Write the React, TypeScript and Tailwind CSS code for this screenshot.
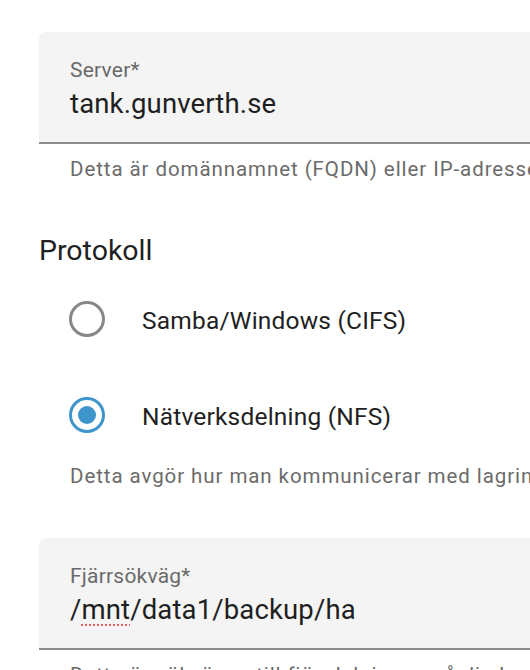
const font = { fontFamily: "Roboto, 'Noto Sans', sans-serif" };

function TextField({ label, value, spell }: { label: string; value: string; spell?: boolean }) {
  return (
    <div className="h-[112px] w-[640px] rounded-t-[7px] border-b-2 border-[#8c8c8c] bg-[#f4f4f4] pl-[31px] pt-[26px]">
      <div className="text-[21px] leading-[24px] tracking-[0.01em] text-[#6a6a6a]">{label}</div>
      <div className="mt-[6px] whitespace-nowrap text-[27.5px] leading-[32px] tracking-[0.005em] text-[#1f1f1f]">
        {spell ? (
          <>
            /
            <span className="underline decoration-dotted decoration-[#e06666] decoration-2 underline-offset-[5px]">mnt</span>
            /data1/backup/ha
          </>
        ) : (
          value
        )}
      </div>
    </div>
  );
}

function Helper({ text, className }: { text: string; className: string }) {
  return (
    <div className={`whitespace-nowrap pl-[31px] text-[20.5px] leading-[24px] tracking-[0.045em] text-[#6b6b6b] ${className}`}>
      {text}
    </div>
  );
}

function Radio({ label, checked }: { label: string; checked?: boolean }) {
  return (
    <div className="flex h-[96px] items-center pl-[30px]">
      <div
        className={`flex h-[36px] w-[36px] items-center justify-center rounded-full border-[3.5px] ${
          checked ? "border-[#3d95cb]" : "border-[#878787]"
        }`}
      >
        {checked && <div className="h-[18px] w-[18px] rounded-full bg-[#3d95cb]" />}
      </div>
      <span className="ml-[37px] mt-[3px] text-[24.5px] leading-[30px] tracking-[0.008em] text-[#1f1f1f]">{label}</span>
    </div>
  );
}

export default function App() {
  return (
    <div className="h-[670px] w-[530px] overflow-hidden bg-white pl-[39px] pt-[32px]" style={font}>
      <TextField label="Server*" value="tank.gunverth.se" />
      <Helper className="mt-[13px]" text="Detta är domännamnet (FQDN) eller IP-adressen till din lagringsenhet" />

      <h2 className="mt-[54px] text-[28.5px] leading-[32px] text-[#1f1f1f]">Protokoll</h2>

      <div className="mt-[4px]">
        <Radio label="Samba/Windows (CIFS)" />
        <Radio label="Nätverksdelning (NFS)" checked />
      </div>

      <Helper className="mt-[1px]" text="Detta avgör hur man kommunicerar med lagringsenheten" />

      <div className="mt-[50px]">
        <TextField label="Fjärrsökväg*" value="/mnt/data1/backup/ha" spell />
      </div>
      <Helper className="mt-[13px]" text="Detta är sökvägen till fjärrdelningen på din lagringsenhet" />
    </div>
  );
}
